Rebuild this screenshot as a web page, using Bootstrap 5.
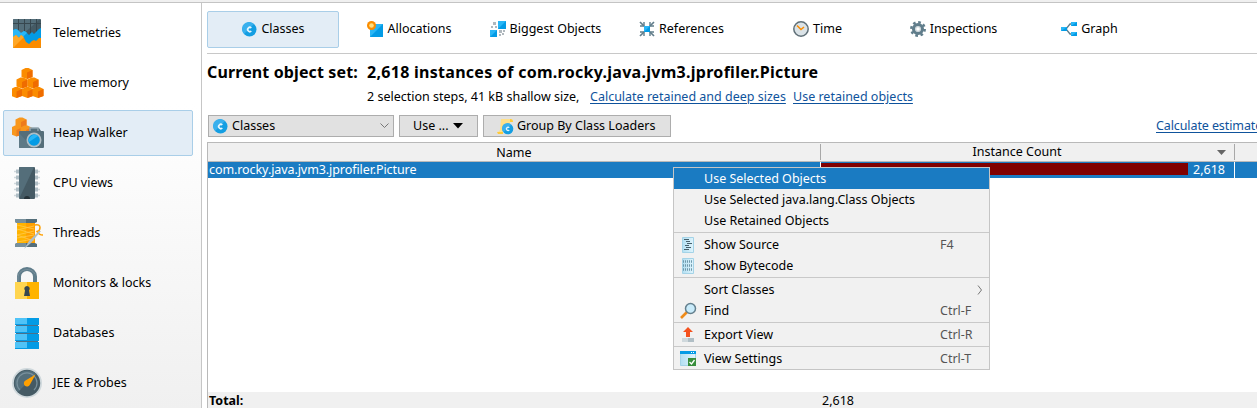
<!DOCTYPE html>
<html lang="en">
<head>
<meta charset="utf-8">
<title>Heap Walker</title>
<link href="https://cdn.jsdelivr.net/npm/bootstrap@5.3.0/dist/css/bootstrap.min.css" rel="stylesheet">
<style>
body{width:1257px;height:408px;font:12.5px/20px "Noto Sans","Open Sans",sans-serif;color:#000;background:#fff}
.topstrip{height:3px;background:#f0f0f0;border-bottom:1px solid #c4c4c4}
.side{width:202px;height:405px;border-right:1px solid #c6c6c6;background:linear-gradient(#fff 25%,#f0f0f0);padding:7px 0 0 3px}
.side .nav-link{flex:none;width:190px;height:46px;margin-bottom:4px;padding:0 0 0 8px;border:1px solid transparent;border-radius:2px;color:#000;gap:9px}
.side .nav-link.active,.tabs .nav-link.active{background:#e3edf6;border-color:#a9cee8}
.main-pane{width:1055px;padding:8px 0 0 5px}
.tabs{gap:4px;height:43px;border-bottom:1px solid #c8c8c8}
.tabs .nav-link{width:132px;height:37px;padding:0 0 1px 1px;border:1px solid transparent;border-radius:2px;color:#000;gap:4px}
.headline{height:22px;margin-top:7px;font-size:16px;font-weight:700;line-height:22px;letter-spacing:.28px}
.hl-label{width:160px;letter-spacing:.12px}
.detail{height:20px;margin:4px 0 0 160px}
a.lnk{color:#0f539c;text-decoration:underline;text-underline-offset:2px}
.tools{height:23px;margin:8px 0 0 1px;gap:5px}
.tool{height:22px;padding:0;border:1px solid #adadad;border-radius:0;background:#e1e1e1;color:#000;font-size:12.5px;line-height:20px}
.tool:hover{background:#e1e1e1}
.grid-box{height:267px;margin-top:4px;border:1px solid #b9b9b9;border-width:1px 0 0 1px}
.g-head{height:19px;background:#f0f0f0;border-bottom:1px solid #b9b9b9;line-height:18px}
.c-name{width:613px}.c-count{width:414px}.c-rest{flex:1}
.g-head .c-name,.g-head .c-count{border-right:1px solid #a8a8a8;height:16px;margin-top:1px}
.g-row{height:16px;background:#1a7bc2;color:#fff;line-height:15px}
.g-row .c-name,.g-row .c-count{border-right:1px solid #fff}
.g-row .c-name{letter-spacing:-.08px}
.meter{width:367px;height:12px;margin-top:1px;background:#800000}
.g-total{height:17px;background:#f0f0f0;line-height:18px}
.ctx{left:673px;top:167px;width:317px;height:203px;min-width:0;padding:0;margin:0;border:1px solid #c5c5c5;border-radius:0;background:#f1f1f1;font-size:12.5px;color:#000}
.ctx .dropdown-item{height:21px;padding:0 8px 0 6px;line-height:21px;color:#000}
.ctx .dropdown-item.active{background:#1a7bc2;color:#fff}
.ctx .ico{width:18px;height:18px;margin-right:6px}
.ctx .key{width:41px;color:#555}
.ctx .dropdown-divider{margin:1px 0;border-top:1px solid #c9c9c9;opacity:1;height:0}
svg{flex:none;display:block}
</style>
</head>
<body class="overflow-hidden position-relative">
<svg width="0" height="0" class="position-absolute"><defs>
<g id="cls"><circle cx="7.500" cy="7.500" r="7" fill="#149ee2"/><path d="M2 12A7 7 0 0 1 12 2z" fill="#39b0ed"/><path d="M9.300 6A2.100 2.100 0 1 0 9.300 9" fill="none" stroke="#e8f6fd" stroke-width="1.700"/></g>
<g id="cube"><path d="M-1.500-5.500H1.500L5.500-3.500V3.500L0 5.500-5.500 3.500V-3.500z" fill="#fb8c00"/><path d="M0-1 5.500-3.500V3.500L0 5.500z" fill="#ef6c00"/></g>
<linearGradient id="doc"><stop stop-color="#b2dff2"/><stop offset="1" stop-color="#e0f4fc"/></linearGradient>
</defs></svg>
<div class="topstrip"></div>
<div class="d-flex">
<nav class="side nav flex-column flex-nowrap">
<a class="nav-link d-flex align-items-center">
<svg width="32" height="32"><rect x="1" y="2" width="28" height="29" rx="1" fill="#455a64"/><path d="M2 2H28L1 26V3z" fill="#546e7a"/><path d="M1 6.500H29M6.500 2V16M12.500 2V16M18.500 2V16M24.500 2V16" stroke="#37474f"/><path d="M1 13l3-1 2 1 3 3 3-2 2 1 3 3 3-3 2 2 3-3 2-2 2-1V31H1z" fill="#039be5"/><path d="M1 13l3-1 2 1 3 3 3-2 2 1 1 1L1 29z" fill="#29b6f6"/><path d="M1 20l3-2 3 3 2-3 3 3 2 4 3 2 3-3 2-1 2 1 3-3 2 0V30q0 1-1 1H2q-1 0-1-1z" fill="#fb8c00"/><path d="M1 20l3-2 3 3 2-3 3 2L1 31z" fill="#ffa726"/></svg><span>Telemetries</span></a>
<a class="nav-link d-flex align-items-center">
<svg width="32" height="32"><use href="#cube" x="15" y="6.500"/><use href="#cube" x="10" y="16"/><use href="#cube" x="21" y="16"/><use href="#cube" x="4.500" y="25.500"/><use href="#cube" x="15.500" y="25.500"/><use href="#cube" x="26" y="25.500"/></svg><span>Live memory</span></a>
<a class="nav-link active d-flex align-items-center">
<svg width="32" height="32"><g opacity=".88"><use href="#cube" x="9" y="6"/><use href="#cube" x="4.500" y="14"/><use href="#cube" x="14" y="14"/></g><path d="M7 15q0-1 1-1h9l2-3h8l2 3h2q1 0 1 1V30q0 1-1 1H8q-1 0-1-1z" fill="#546e7a"/><path d="M7 30V16l14 15H8q-1 0-1-1z" fill="#5e7986"/><path d="M18 14v-3h8v3" fill="none" stroke="#90a4ae" stroke-width="1.500"/><circle cx="22" cy="23" r="7.500" fill="#b0bec5"/><circle cx="22" cy="23" r="5.800" fill="#039be5"/><path d="M17 25A5.800 5.800 0 0 1 26 19z" fill="#29b6f6"/></svg><span>Heap Walker</span></a>
<a class="nav-link d-flex align-items-center">
<svg width="32" height="32"><path d="M2 4.500H28M2 10.500H28M2 16.500H28M2 22.500H28M2 28.500H28" stroke="#cfd8dc" stroke-width="1.500"/><path d="M4 4.500H7M4 10.500H7M4 16.500H7M4 22.500H7M4 28.500H7M23 4.500H26M23 10.500H26M23 16.500H26M23 22.500H26M23 28.500H26" stroke="#b0bec5" stroke-width="4"/><rect x="7" y="0" width="16" height="32" rx="1" fill="#455a64"/><path d="M8 0H22L7 32V1z" fill="#546e7a"/><path d="M12 32a3 3 0 0 1 6 0z" fill="#263238"/></svg><span>CPU views</span></a>
<a class="nav-link d-flex align-items-center">
<svg width="32" height="32"><path d="M5 5H23V27H5z" fill="#ffa000"/><path d="M5 5H14V27H5z" fill="#ffb300"/><path d="M5 8l17 4M5 13l17-4M5 12l17 5M5 18l17-4M5 21l17-3M5 18l17 6M5 25l17-3" stroke="#ffc94d" stroke-width=".8"/><path d="M3 2H25V5L23 6H5L3 5zM3 30V27L5 26H23L25 27V30z" fill="#546e7a"/><path d="M3 2H14V6H5L3 5zM3 30V27L5 26H14V30z" fill="#78909c"/><path d="M23 8q5-1 5 2.500t-3 4q2 3.500 6 3.500" fill="none" stroke="#ffa000" stroke-width="1.500"/><path d="M29 14 19 26l-7 6 5-8L27 14z" fill="#b0bec5"/></svg><span>Threads</span></a>
<a class="nav-link d-flex align-items-center">
<svg width="32" height="32"><path d="M7 17V9.500a8 7.500 0 0 1 16 0V17" fill="none" stroke="#607d8b" stroke-width="4"/><path d="M6 15V10a9 8 0 0 1 17-3" fill="none" stroke="#78909c"/><path d="M3 15H27V32H3z" fill="#ffb300"/><path d="M3 15H15V32H3z" fill="#ffd54f"/><path d="M15 19a2.700 2.700 0 0 1 2 4.500l1 5.500H12l1-5.500a2.700 2.700 0 0 1 2-4.500z" fill="#37474f"/></svg><span>Monitors &amp; locks</span></a>
<a class="nav-link d-flex align-items-center">
<svg width="32" height="32"><path d="M3 1H27V32H3z" fill="#039be5"/><path d="M3 1H15V32H3z" fill="#4fc3f7"/><path d="M3 7.500H15M3 15.500H15M3 23.500H15M3 31.500H27" stroke="#039be5"/><path d="M4 8.500H26M4 16.500H26M4 24.500H26" stroke="#4a718b"/><path d="M3 8.500H4M26 8.500H27M3 16.500H4M26 16.500H27M3 24.500H4M26 24.500H27" stroke="#f5f5f5"/></svg><span>Databases</span></a>
<a class="nav-link d-flex align-items-center">
<svg width="32" height="32"><circle cx="15" cy="16" r="15" fill="#cfd8dc"/><circle cx="15" cy="16" r="13.200" fill="#455a64"/><path d="M5.700 25.300A13.200 13.200 0 0 1 24.300 6.700z" fill="#546e7a"/><path d="M8 23A10 10 0 1 1 22 23" fill="none" stroke="#78909c" stroke-width="1.200"/><path d="M23.500 7.500 18 17.500a3.200 3.200 0 1 1-4.500-4z" fill="#ffa000"/></svg><span>JEE &amp; Probes</span></a>
</nav>
<main class="main-pane">
<nav class="tabs nav flex-nowrap">
<a class="nav-link active d-flex align-items-center justify-content-center"><svg width="15" height="15"><use href="#cls"/></svg><span>Classes</span></a>
<a class="nav-link d-flex align-items-center justify-content-center"><svg width="16" height="16"><path d="M3 3H16V16H3z" fill="#039be5"/><path d="M3 3H16L3 16z" fill="#29b6f6"/><circle cx="4.500" cy="4.500" r="4.500" fill="#fb8c00"/><circle cx="4.500" cy="4.500" r="2.300" fill="#ffe082"/></svg><span>Allocations</span></a>
<a class="nav-link d-flex align-items-center justify-content-center"><svg width="16" height="16"><path d="M8 0H16V8H8zM0 9H7V16H0z" fill="#039be5"/><path d="M8 0H16L8 8zM0 9H7L0 16z" fill="#29b6f6"/><path d="M3 1H6V4H3zM1 5H3V7H1zM5 5H7V7H5zM9 9H12V12H9zM13 9H15V11H13zM12 12H14V14H12zM9 13H11V15H9z" fill="#b0b8be"/></svg><span>Biggest Objects</span></a>
<a class="nav-link d-flex align-items-center justify-content-center"><svg width="16" height="16"><path d="M1 1 5 5M15 1 11 5M1 15 5 11M15 15 11 11" stroke="#607d8b" stroke-width="1.700"/><path d="M1 5H5V1M11 1V5H15M1 11H5V15M11 15V11H15" fill="none" stroke="#607d8b" stroke-width="1.400"/><path d="M5 5H11V11H5z" fill="#039be5"/><path d="M5 5H11L5 11z" fill="#29b6f6"/></svg><span>References</span></a>
<a class="nav-link d-flex align-items-center justify-content-center"><svg width="16" height="16"><circle cx="8" cy="8" r="7.200" fill="#dbe3e7" stroke="#607078" stroke-width="1.500"/><path d="M4 4.500 8 8.500 11 6" fill="none" stroke="#fb8c00" stroke-width="1.500"/></svg><span>Time</span></a>
<a class="nav-link d-flex align-items-center justify-content-center"><svg width="16" height="16"><circle cx="8" cy="8" r="6.700" fill="none" stroke="#607d8b" stroke-width="2.500" stroke-dasharray="2.630"/><circle cx="8" cy="8" r="4.300" fill="#fff" stroke="#607d8b" stroke-width="3.500"/><circle cx="8" cy="8" r="3" fill="#cfd8dc"/><circle cx="8" cy="8" r="1.700" fill="#fff"/></svg><span>Inspections</span></a>
<a class="nav-link d-flex align-items-center justify-content-center"><svg width="16" height="16"><path d="M11 3H9L5 8l4 5h2" fill="none" stroke="#607d8b" stroke-width="1.300"/><path d="M0 6H6V10H0zM10 1H16V5H10zM10 11H16V15H10z" fill="#039be5"/><path d="M0 6H6L0 10zM10 1H16L10 5zM10 11H16L10 15z" fill="#29b6f6"/></svg><span>Graph</span></a>
</nav>
<div class="headline d-flex text-nowrap"><div class="hl-label"><span>Current object set:</span></div><span>2,618 instances of com.rocky.java.jvm3.jprofiler.Picture</span></div>
<div class="detail d-flex text-nowrap"><span style="width:223px">2 selection steps, 41 kB shallow size,</span><span style="width:203px"><a class="lnk">Calculate retained and deep sizes</a></span><a class="lnk">Use retained objects</a></div>
<div class="tools d-flex text-nowrap">
<button class="tool btn d-flex align-items-center" style="width:186px"><svg class="ms-1" width="15" height="15"><use href="#cls"/></svg><span class="ms-1">Classes</span><svg class="ms-auto me-1" width="9" height="6"><path d="M.500.500 4.500 4.500 8.500.500" fill="none" stroke="#777"/></svg></button>
<button class="tool btn d-flex align-items-center" style="width:79px;padding-left:13px"><span>Use ...</span><svg style="margin-left:5px" width="10" height="6"><path d="M0 0H10L5 5.500z"/></svg></button>
<button class="tool btn d-flex align-items-center" style="width:188px;padding-left:13px"><svg width="17" height="17"><path d="M4 1H14q2 0 2 3H13V14H0q2 0 3-2z" fill="#ffe08a"/><path d="M13 4V1q3 0 3 3zM0 14h6v2H1z" fill="#ffca3a"/><g transform="translate(5 5) scale(.78)"><use href="#cls"/></g></svg><span style="margin-left:3px">Group By Class Loaders</span></button>
<a class="lnk ms-auto" style="width:101px;margin-top:1px;letter-spacing:-.1px">Calculate estimate</a>
</div>
<section class="grid-box d-flex flex-column">
<div class="g-head d-flex text-center"><div class="c-name">Name</div><div class="c-count d-flex align-items-center"><span class="flex-fill" style="padding-right:4px">Instance Count</span><svg style="margin-right:8px" width="9" height="5"><path d="M0 0H9L4.500 5z" fill="#666"/></svg></div><div class="c-rest"></div></div>
<div class="g-row d-flex"><div class="c-name"><span style="margin-left:1px">com.rocky.java.jvm3.jprofiler.Picture</span></div><div class="c-count d-flex"><div class="meter"></div><span style="margin-left:5px">2,618</span></div><div class="c-rest"></div></div>
<div class="g-total mt-auto d-flex"><div class="c-name fw-bold"><span style="margin-left:1px">Total:</span></div><span style="margin-left:1px">2,618</span></div>
</section>
</main>
</div>
<div class="ctx dropdown-menu show position-absolute">
<a class="dropdown-item active d-flex align-items-center"><i class="ico"></i><span>Use Selected Objects</span></a>
<a class="dropdown-item d-flex align-items-center"><i class="ico"></i><span>Use Selected java.lang.Class Objects</span></a>
<a class="dropdown-item d-flex align-items-center"><i class="ico"></i><span>Use Retained Objects</span></a>
<hr class="dropdown-divider">
<a class="dropdown-item d-flex align-items-center"><svg class="ico" viewBox="0 0 18 18"><path d="M2.500 1.500H13.500V16.500H2.500z" fill="url(#doc)" stroke="#a4d3e7"/><path d="M4 3.500H9M6 5.500H10M7 7.500H12M5 9.500H9M6 11.500H11M4 13.500H9" stroke="#46606c"/></svg><span>Show Source</span><span class="key ms-auto">F4</span></a>
<a class="dropdown-item d-flex align-items-center"><svg class="ico" viewBox="0 0 18 18"><path d="M2.500 1.500H13.500V16.500H2.500z" fill="url(#doc)" stroke="#a4d3e7"/><path d="M3 4.500H13M3 8.500H13M3 12.500H13" stroke="#6f98ab" stroke-width="2.500" stroke-dasharray="1 1"/></svg><span>Show Bytecode</span></a>
<hr class="dropdown-divider">
<a class="dropdown-item d-flex align-items-center"><i class="ico"></i><span>Sort Classes</span><svg class="ms-auto" style="margin-right:-2px" width="6" height="10"><path d="M1 .500 4.500 5 1 9.500" fill="none" stroke="#777"/></svg></a>
<a class="dropdown-item d-flex align-items-center"><svg class="ico" viewBox="0 0 18 18"><path d="M7 10 1 16" stroke="#ef8b1a" stroke-width="2.600"/><circle cx="10.500" cy="6.500" r="5" fill="#c9ebfa" stroke="#64808e" stroke-width="1.500"/></svg><span>Find</span><span class="key ms-auto">Ctrl-F</span></a>
<hr class="dropdown-divider">
<a class="dropdown-item d-flex align-items-center"><svg class="ico" viewBox="0 0 18 18"><path d="M8 1 13 6H10V11H6V6H3z" fill="#f4511e"/><path d="M2 12H14V16H2z" fill="#b0bec5"/><path d="M2 12H8V16H2z" fill="#cfd8dc"/></svg><span>Export View</span><span class="key ms-auto">Ctrl-R</span></a>
<hr class="dropdown-divider">
<a class="dropdown-item d-flex align-items-center"><svg class="ico" viewBox="0 0 18 18"><path d="M.500 2H15.500V15.500H.500z" fill="url(#doc)" stroke="#a4d3e7"/><path d="M0 1H16V4H0z" fill="#039be5"/><path d="M11 2.500H12M13 2.500H14" stroke="#fff"/><path d="M8 8H16V16H8z" fill="#388e3c"/><path d="M9.500 12 11.500 14 14.500 10" fill="none" stroke="#fff" stroke-width="1.300"/></svg><span>View Settings</span><span class="key ms-auto">Ctrl-T</span></a>
</div>
<script src="https://cdn.jsdelivr.net/npm/bootstrap@5.3.0/dist/js/bootstrap.bundle.min.js"></script>
</body>
</html>
